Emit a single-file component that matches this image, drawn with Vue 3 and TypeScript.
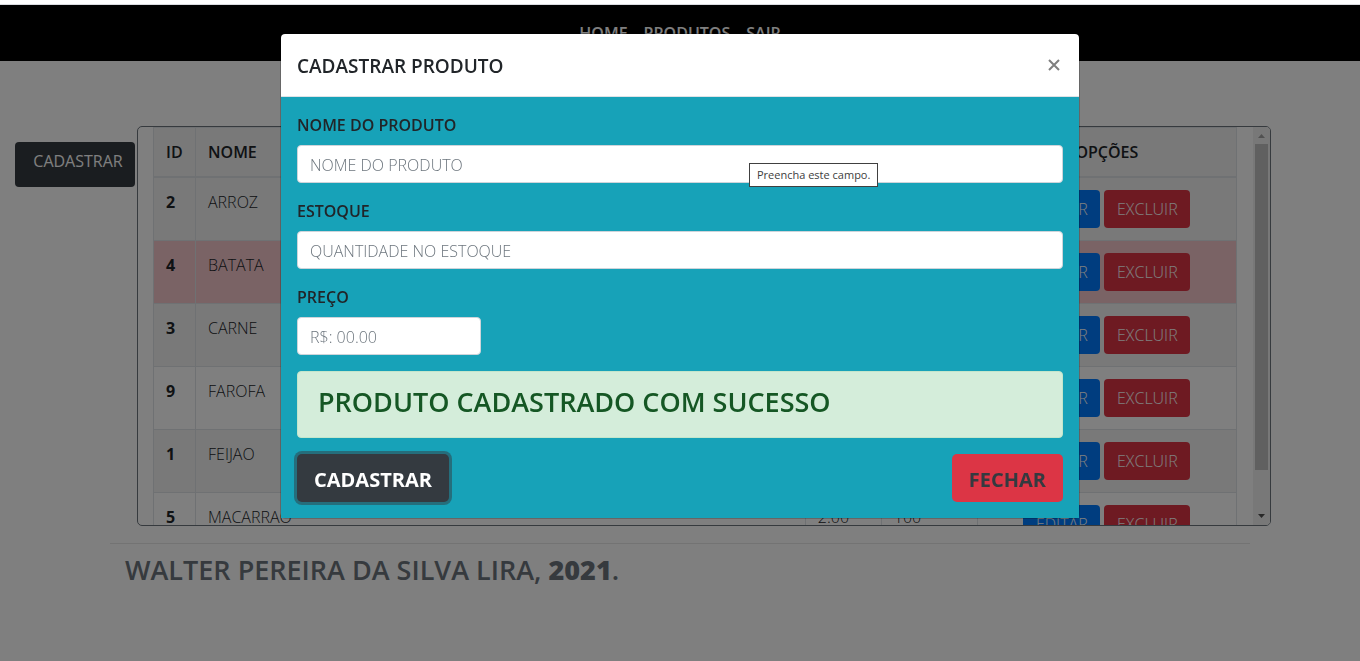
<script setup lang="ts">
import { ref } from 'vue'

interface Product {
  id: number
  name: string
  price: string
  stock: number
  low?: boolean
}

const products: Product[] = [
  { id: 2, name: 'ARROZ', price: '5.00', stock: 50 },
  { id: 4, name: 'BATATA', price: '3.00', stock: 5, low: true },
  { id: 3, name: 'CARNE', price: '30.00', stock: 40 },
  { id: 9, name: 'FAROFA', price: '4.00', stock: 60 },
  { id: 1, name: 'FEIJAO', price: '7.00', stock: 80 },
  { id: 5, name: 'MACARRAO', price: '2.00', stock: 100 },
]

const name = ref('')
const stock = ref('')
const price = ref('')
</script>

<template>
  <div class="app">
    <div class="strip"></div>
    <nav class="nav">
      <a href="#">HOME</a>
      <a href="#">PRODUTOS</a>
      <a href="#">SAIR</a>
    </nav>

    <main class="content">
      <button type="button" class="open-btn">CADASTRAR</button>
      <div class="box">
        <div class="table-wrap">
          <table>
            <colgroup>
              <col class="c-id" />
              <col />
              <col class="c-price" />
              <col class="c-stock" />
              <col class="c-opt" />
            </colgroup>
            <thead>
              <tr>
                <th>ID</th>
                <th>NOME</th>
                <th>PREÇO</th>
                <th>ESTOQUE</th>
                <th class="center">OPÇÕES</th>
              </tr>
            </thead>
            <tbody>
              <tr v-for="p in products" :key="p.id" :class="{ danger: p.low }">
                <th scope="row">{{ p.id }}</th>
                <td>{{ p.name }}</td>
                <td>{{ p.price }}</td>
                <td>{{ p.stock }}</td>
                <td>
                  <div class="actions">
                    <button type="button" class="btn blue">EDITAR</button>
                    <button type="button" class="btn red">EXCLUIR</button>
                  </div>
                </td>
              </tr>
            </tbody>
          </table>
        </div>
        <div class="scroll">
          <svg width="17" height="17" viewBox="0 0 17 17"><path d="M5 11L8.5 7L12 11Z" fill="#a3a3a3" /></svg>
          <div class="thumb"></div>
          <svg class="down" width="17" height="17" viewBox="0 0 17 17"><path d="M5 6L8.5 10L12 6Z" fill="#505050" /></svg>
        </div>
      </div>
    </main>

    <footer class="footer">
      <h3>WALTER PEREIRA DA SILVA LIRA, <strong>2021</strong>.</h3>
    </footer>

    <div class="backdrop">
      <section class="modal" role="dialog" aria-labelledby="modal-title">
        <header class="modal-head">
          <h5 id="modal-title">CADASTRAR PRODUTO</h5>
          <button type="button" class="close" aria-label="Fechar">
            <svg width="12" height="12" viewBox="0 0 12 12"><path d="M1 1L11 11M11 1L1 11" stroke="#7f7f7f" stroke-width="2" /></svg>
          </button>
        </header>
        <form class="modal-body" @submit.prevent>
          <div class="group">
            <label for="name">NOME DO PRODUTO</label>
            <input id="name" v-model="name" type="text" placeholder="NOME DO PRODUTO" />
            <div class="tip" role="tooltip">Preencha este campo.</div>
          </div>
          <div class="group">
            <label for="stock">ESTOQUE</label>
            <input id="stock" v-model="stock" type="text" placeholder="QUANTIDADE NO ESTOQUE" />
          </div>
          <div class="group">
            <label for="price">PREÇO</label>
            <input id="price" v-model="price" class="quarter" type="text" placeholder="R$: 00.00" />
          </div>
          <div class="alert" role="alert"><h3>PRODUTO CADASTRADO COM SUCESSO</h3></div>
          <div class="buttons">
            <button type="submit" class="lg dark">CADASTRAR</button>
            <button type="button" class="lg close-red">FECHAR</button>
          </div>
        </form>
      </section>
    </div>
  </div>
</template>

<style>
body {
  margin: 0;
  overflow: hidden;
}
</style>

<style scoped>
.app,
.app * {
  box-sizing: border-box;
}
.app {
  min-height: 100vh;
  background: #fff;
  color: #212529;
  font: 300 16px/24px "Open Sans", "Noto Sans", sans-serif;
}
button,
input {
  font: inherit;
}
h3,
h5 {
  margin: 0;
  font-weight: 600;
}
.strip {
  height: 5px;
  border-bottom: 1px solid #dadce0;
}
.nav {
  display: flex;
  justify-content: center;
  gap: 16px;
  height: 56px;
  padding-top: 16px;
  background: #000;
}
.nav a {
  color: #fff;
  font-weight: 600;
  text-decoration: none;
}
.content {
  display: flex;
  align-items: flex-start;
  gap: 2px;
  padding: 65px 0 0 15px;
}
.open-btn {
  width: 120px;
  height: 45px;
  margin-top: 16px;
  padding: 0 8px 8px 14px;
  border: 0;
  border-radius: 4px;
  background: #343a40;
  color: #fff;
  font-weight: 400;
}
.box {
  display: flex;
  width: 84.3%;
  height: 400px;
  border: 1px solid #6c757d;
  border-radius: 5px;
  overflow: hidden;
}
.table-wrap {
  flex: 1;
  padding: 0 16px 0 15px;
  overflow: hidden;
}
table {
  width: 100%;
  table-layout: fixed;
  border-collapse: collapse;
}
.c-id {
  width: 42px;
}
.c-price {
  width: 76px;
}
.c-stock {
  width: 96px;
}
.c-opt {
  width: 259px;
}
th,
td {
  padding: 12px;
  border: 1px solid #dee2e6;
  vertical-align: top;
  text-align: left;
}
th {
  font-weight: 600;
}
tbody th {
  font-weight: 700;
}
thead th {
  border-bottom-width: 2px;
}
thead tr,
tbody tr:nth-child(odd) {
  background: #f2f2f2;
}
tbody tr.danger {
  background: #f5c6cb;
}
th.center {
  text-align: center;
}
.actions {
  display: flex;
  justify-content: center;
  gap: 4px;
}
.btn {
  height: 38px;
  padding: 0;
  border: 0;
  border-radius: 4px;
  color: #fff;
}
.blue {
  width: 77px;
  background: #007bff;
}
.red {
  width: 86px;
  background: #dc3545;
}
.scroll {
  display: flex;
  flex-direction: column;
  width: 17px;
  background: #f1f1f1;
}
.thumb {
  height: 326px;
  margin: 0 2px;
  background: #c1c1c1;
}
.scroll .down {
  margin-top: auto;
}
.footer {
  width: calc(100% - 220px);
  margin: 17px auto 0;
  padding: 9px 15px;
  border-top: 1px solid #e6e6e6;
  color: #6c757d;
}
.footer h3 {
  font-size: 27px;
  line-height: 34px;
}
.backdrop {
  position: fixed;
  inset: 5px 0 0;
  padding-top: 28px;
  background: rgba(0, 0, 0, 0.5);
}
.modal {
  width: 800px;
  max-width: 100%;
  margin: 0 auto;
  border: 1px solid rgba(0, 0, 0, 0.2);
  border-radius: 5px;
  background: #fff;
  background-clip: padding-box;
}
.modal-head {
  display: flex;
  justify-content: space-between;
  align-items: center;
  padding: 16px;
  border-bottom: 1px solid #dee2e6;
}
.modal-head h5 {
  padding-top: 2px;
  font-size: 19px;
  line-height: 28px;
}
.close {
  display: flex;
  padding: 0 3px;
  border: 0;
  background: none;
}
.modal-body {
  padding: 16px;
  background: #17a2b8;
}
.group {
  position: relative;
  margin-bottom: 16px;
}
label {
  display: block;
  margin-bottom: 8px;
  font-weight: 600;
}
input {
  display: block;
  width: 100%;
  height: 38px;
  padding: 2px 12px 0;
  border: 1px solid #ced4da;
  border-radius: 4px;
  background: #fff;
}
input.quarter {
  width: 24%;
}
input::placeholder {
  color: #6c757d;
  opacity: 1;
}
.tip {
  position: absolute;
  left: 452px;
  top: 50px;
  padding: 2px 7px;
  border: 1px solid #404040;
  background: #fff;
  color: #404040;
  font: 400 11px/20px "Open Sans", sans-serif;
  line-height: 18px;
  white-space: nowrap;
}
.alert {
  margin-bottom: 16px;
  padding: 13px 20px 19px;
  border: 1px solid #c3e6cb;
  border-radius: 4px;
  background: #d4edda;
  color: #155724;
}
.alert h3 {
  font-size: 27px;
  line-height: 33px;
}
.buttons {
  display: flex;
  justify-content: space-between;
}
.lg {
  height: 48px;
  padding: 4px 17px 0;
  border: 0;
  border-radius: 5px;
  font-size: 20px;
  font-weight: 700;
}
.dark {
  background: #343a40;
  color: #fff;
  box-shadow: 0 0 0 3px rgba(52, 58, 64, 0.5);
}
.close-red {
  background: #dc3545;
  color: #343a40;
}
</style>
